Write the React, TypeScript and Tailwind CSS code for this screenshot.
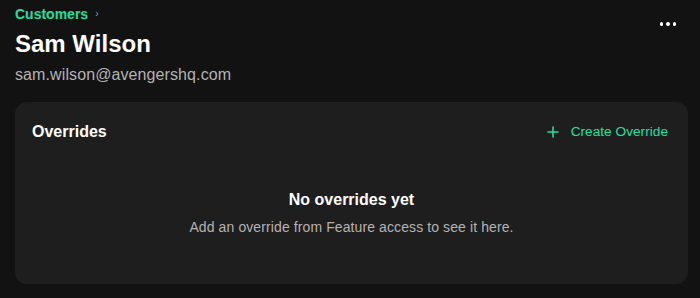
export default function App() {
  return (
    <main
      className="min-h-[298px] w-[700px] bg-[#121212] pl-[15px] pr-[12px] pt-[4px] text-white"
      style={{ fontFamily: '"Liberation Sans", Arial, sans-serif' }}
    >
      <div className="flex items-start justify-between">
        <div>
          <div className="flex items-center gap-[7px] text-[14px] leading-[20px] font-bold text-[#1fe0a0]">
            <span>Customers</span>
            <span className="text-[10px] font-normal text-[#9a9a9a]">›</span>
          </div>
          <h1 className="mt-[5px] text-[24px] leading-[30px] font-bold">Sam Wilson</h1>
          <p className="mt-[6px] text-[16px] leading-[20px] tracking-[0.1px] text-[#b3b3b3]">
            sam.wilson@avengershq.com
          </p>
        </div>
        <button className="mt-[18px] mr-[12px] flex gap-[3px]">
          <span className="h-[3.5px] w-[3.5px] rounded-full bg-white" />
          <span className="h-[3.5px] w-[3.5px] rounded-full bg-white" />
          <span className="h-[3.5px] w-[3.5px] rounded-full bg-white" />
        </button>
      </div>

      <section className="mt-[17px] h-[182px] rounded-[12px] bg-[#1e1e1e] px-[17px] pt-[20px]">
        <div className="flex items-center justify-between">
          <h2 className="text-[16px] leading-[20px] font-bold">Overrides</h2>
          <button className="flex items-center gap-[12px] pr-[3px] text-[13.7px] leading-[20px] text-[#1fe0a0]">
            <svg width="12" height="12" viewBox="0 0 12 12" fill="none">
              <path d="M6 1v10M1 6h10" stroke="currentColor" strokeWidth="1.6" strokeLinecap="round" />
            </svg>
            <span>Create Override</span>
          </button>
        </div>
        <div className="mt-[48px] flex flex-col items-center">
          <p className="text-[16px] leading-[20px] font-bold">No overrides yet</p>
          <p className="mt-[8px] text-[14px] leading-[18px] tracking-[0.1px] text-[#b3b3b3]">
            Add an override from Feature access to see it here.
          </p>
        </div>
      </section>
    </main>
  );
}
